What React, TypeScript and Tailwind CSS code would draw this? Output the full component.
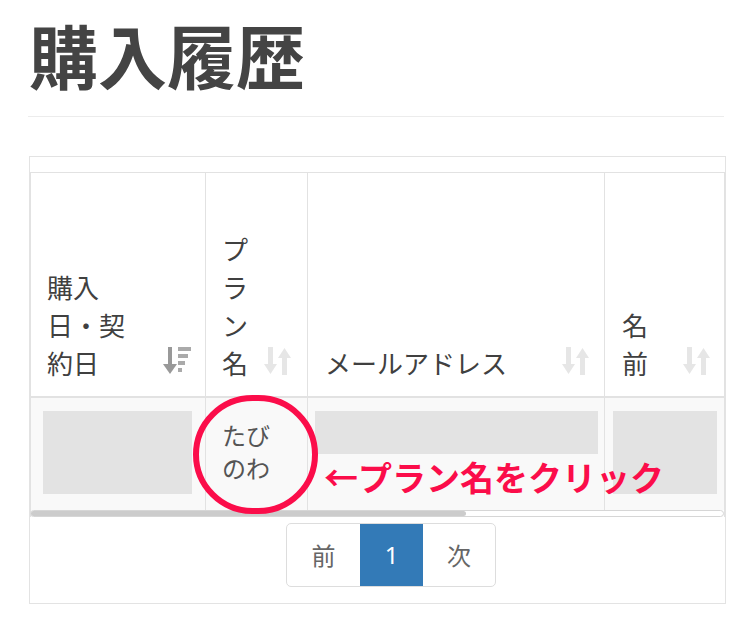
const font = { fontFamily: '"Noto Sans CJK JP", "Noto Sans", sans-serif' };

const SortDesc = () => (
  <svg width="28" height="28" viewBox="0 0 28 28" className="shrink-0">
    <rect x="5" y="0" width="4" height="19" fill="#999" />
    <polygon points="0,17 14,17 7,27" fill="#999" />
    <rect x="15" y="0" width="13" height="4" fill="#aaa" />
    <rect x="15" y="7" width="10" height="4" fill="#aaa" />
    <rect x="15" y="14" width="7" height="4" fill="#aaa" />
    <rect x="15" y="21" width="4" height="4" fill="#aaa" />
  </svg>
);

const SortBoth = () => (
  <svg width="27" height="28" viewBox="0 0 27 28" className="shrink-0">
    <rect x="4" y="0" width="5" height="19" fill="#e6e6e6" />
    <polygon points="0,17 13,17 6.5,27" fill="#e6e6e6" />
    <rect x="18" y="9" width="5" height="19" fill="#e6e6e6" />
    <polygon points="14,11 27,11 20.5,1" fill="#e6e6e6" />
  </svg>
);

function HeadCell({ width, pl, pr, lines, desc, border = true }: { width: string; pl: string; pr: string; lines: string[]; desc?: boolean; border?: boolean }) {
  return (
    <div className={`${width} ${pl} ${pr} ${border ? 'border-r border-[#e2e2e2]' : ''} flex items-end justify-between pb-[14px]`}>
      <div className="text-[26px] leading-[38px] text-[#404040]">
        {lines.map((l, i) => (
          <div key={i}>{l}</div>
        ))}
      </div>
      <div className="mb-[7px]">{desc ? <SortDesc /> : <SortBoth />}</div>
    </div>
  );
}

export default function App() {
  return (
    <div className="relative w-[754px] h-[630px] bg-white overflow-hidden" style={font}>
      <h1 className="ml-[29px] pt-[20px] text-[69px] leading-none font-bold text-[#444]">購入履歴</h1>
      <div className="ml-[28px] mr-[30px] mt-[27px] border-t border-[#ececec]" />

      <div className="ml-[29px] mt-[39px] w-[697px] border border-[#e3e3e3] pt-[15px] pb-[16px]">
        {/* テーブル */}
        <div className="w-[695px] border border-[#e2e2e2] border-b-0">
          <div className="flex h-[225px] border-b-2 border-[#e2e2e2]">
            <HeadCell width="w-[175px]" pl="pl-[16px]" pr="pr-[14px]" lines={['購入', '日・契', '約日']} desc />
            <HeadCell width="w-[102px]" pl="pl-[16px]" pr="pr-[16px]" lines={['プ', 'ラ', 'ン', '名']} />
            <HeadCell width="w-[297px]" pl="pl-[17px]" pr="pr-[15px]" lines={['メールアドレス']} />
            <HeadCell width="w-[119px]" pl="pl-[17px]" pr="pr-[14px]" lines={['名', '前']} border={false} />
          </div>
          <div className="flex h-[112px] bg-[#f9f9f9]">
            <div className="w-[175px] border-r border-[#e2e2e2] pl-[12px] pr-[13px] pt-[13px]">
              <div className="h-[83px] bg-[#e3e3e3]" />
            </div>
            <div className="w-[102px] border-r border-[#e2e2e2] pl-[16px] pt-[20px] text-[24px] leading-[33px] text-[#555]">
              <div>たび</div>
              <div>のわ</div>
            </div>
            <div className="w-[297px] border-r border-[#e2e2e2] pl-[7px] pr-[6px] pt-[13px]">
              <div className="h-[43px] bg-[#e3e3e3]" />
            </div>
            <div className="w-[119px] pl-[8px] pr-[7px] pt-[13px]">
              <div className="h-[83px] bg-[#e3e3e3]" />
            </div>
          </div>
          {/* スクロールバー */}
          <div className="h-[7px] border border-[#d6d6d6] rounded-full bg-white -ml-px w-[694px]">
            <div className="h-full w-[435px] bg-[#cccccc] rounded-full" />
          </div>
        </div>

        {/* ページネーション */}
        <div className="ml-[256px] mt-[6px] flex w-fit h-[64px] border border-[#dddddd] rounded-[5px] overflow-hidden text-[24px] text-[#666]">
          <div className="w-[73px] flex items-center justify-center">前</div>
          <div className="w-[63px] flex items-center justify-center bg-[#337ab7] text-white" style={{ fontFamily: '"Noto Sans", sans-serif' }}>1</div>
          <div className="w-[72px] flex items-center justify-center">次</div>
        </div>
      </div>

      {/* 注釈 */}
      <div className="absolute left-[193px] top-[395px] w-[125px] h-[119px] rounded-full border-[6px] border-[#fb0d4a]" />
      <div className="absolute left-[324px] top-[460px] text-[34px] leading-none font-bold text-[#fb0d4a] whitespace-nowrap">←プラン名をクリック</div>
    </div>
  );
}
